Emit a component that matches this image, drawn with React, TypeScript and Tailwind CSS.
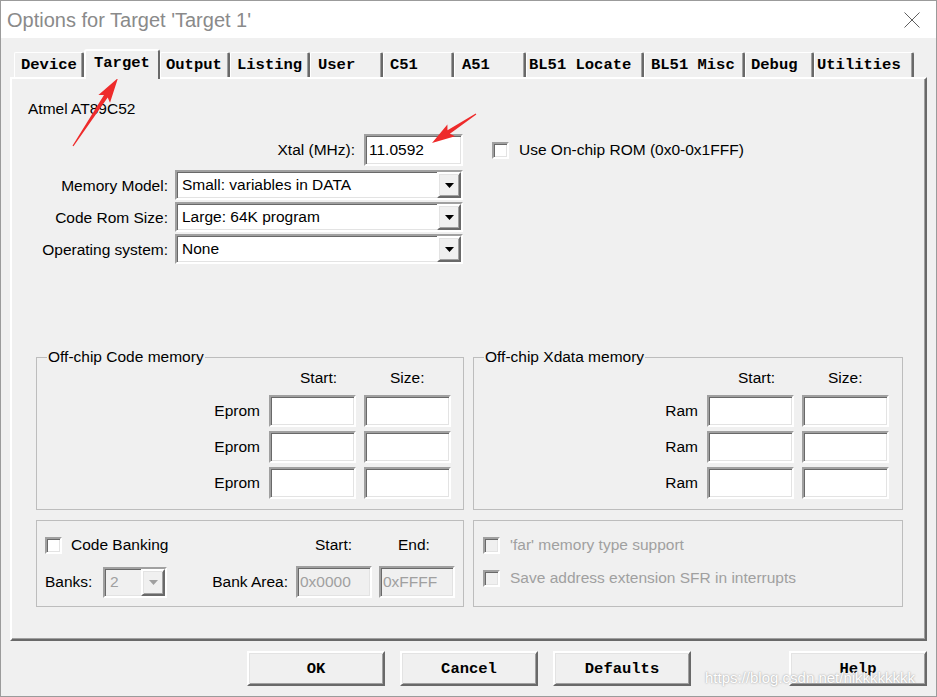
import React from "react";

const sans = "font-['Liberation_Sans',Arial,sans-serif]";
const mono = "font-['Liberation_Mono','Courier_New',monospace]";

const sunken =
  "border-2 border-t-[#a0a0a0] border-l-[#a0a0a0] border-b-white border-r-white shadow-[inset_1px_1px_0_#696969,inset_-1px_-1px_0_#e3e3e3]";
const raised =
  "border-2 border-t-white border-l-white border-b-[#696969] border-r-[#696969] shadow-[inset_1px_1px_0_#e3e3e3,inset_-1px_-1px_0_#a0a0a0]";

const tabs = [
  { name: "Device", w: "w-[70px]", pad: "pl-[6px]" },
  { name: "Target", w: "w-[76px]", pad: "pl-[8px]", active: true },
  { name: "Output", w: "w-[70px]", pad: "pl-[5px]" },
  { name: "Listing", w: "w-[80px]", pad: "pl-[6px]" },
  { name: "User", w: "w-[73px]", pad: "pl-[7px]" },
  { name: "C51", w: "w-[71px]", pad: "pl-[6px]" },
  { name: "A51", w: "w-[72px]", pad: "pl-[7px]" },
  { name: "BL51 Locate", w: "w-[118px]", pad: "pl-[2px]" },
  { name: "BL51 Misc", w: "w-[101px]", pad: "pl-[6px]" },
  { name: "Debug", w: "w-[69px]", pad: "pl-[5px]" },
  { name: "Utilities", w: "w-[100px]", pad: "pl-[2px]" },
];

function arrowPoints(x1: number, y1: number, x2: number, y2: number, head = 20, hw = 7) {
  const dx = x2 - x1;
  const dy = y2 - y1;
  const len = Math.hypot(dx, dy);
  const ux = dx / len;
  const uy = dy / len;
  const nx = -uy;
  const ny = ux;
  const bx = x2 - ux * head;
  const by = y2 - uy * head;
  const p = (x: number, y: number) => `${x.toFixed(1)},${y.toFixed(1)}`;
  return [
    p(x1 + nx * 0.6, y1 + ny * 0.6),
    p(bx + nx * 2.2, by + ny * 2.2),
    p(bx + nx * hw - ux * 3, by + ny * hw - uy * 3),
    p(x2, y2),
    p(bx - nx * hw - ux * 3, by - ny * hw - uy * 3),
    p(bx - nx * 2.2, by - ny * 2.2),
    p(x1 - nx * 0.6, y1 - ny * 0.6),
  ].join(" ");
}

function Check({ disabled, className = "" }: { disabled?: boolean; className?: string }) {
  return (
    <div
      className={`w-[17px] h-[17px] shrink-0 ${sunken} ${
        disabled ? "bg-[#f0f0f0]" : "bg-white"
      } ${className}`}
    />
  );
}

function Combo({
  text,
  className,
  disabled,
  btn = "w-[24px]",
}: {
  text: string;
  className: string;
  disabled?: boolean;
  btn?: string;
}) {
  return (
    <div
      className={`flex ${sunken} ${disabled ? "bg-[#f0f0f0] text-[#a0a0a0]" : "bg-white"} ${className}`}
    >
      <div className="flex-1 flex items-center pl-[5px]">{text}</div>
      <div className={`${btn} ${raised} bg-[#f0f0f0] flex items-center justify-center`}>
        <svg width="9" height="5" viewBox="0 0 9 5">
          <polygon points="0,0 9,0 4.5,5" fill={disabled ? "#a0a0a0" : "#000"} />
        </svg>
      </div>
    </div>
  );
}

function Field({ text, className, disabled }: { text?: string; className: string; disabled?: boolean }) {
  return (
    <div
      className={`flex items-center ${sunken} ${
        disabled ? "bg-[#f0f0f0] text-[#a0a0a0] pl-[2px]" : "bg-white pl-[3px]"
      } ${className}`}
    >
      {text}
    </div>
  );
}

function MemGroup({ title, label, wide }: { title: string; label: string; wide?: boolean }) {
  return (
    <fieldset
      className={`border border-[#bdbdbd] pb-[10px] flex flex-col items-end ${
        wide ? "w-[430px] pr-[13px]" : "w-[428px] pr-[12px]"
      }`}
    >
      <legend className="ml-[10px] px-[1px]">{title}</legend>
      <div className="mt-[1px] flex gap-[8px]">
        <div className="w-[87px] pl-[31px]">Start:</div>
        <div className="w-[87px] pl-[26px]">Size:</div>
      </div>
      <div className="mt-[7px] flex flex-col gap-[4px]">
        {[0, 1, 2].map((i) => (
          <div key={i} className="flex items-center gap-[8px]">
            <span className="mr-[1px]">{label}</span>
            <Field className="w-[87px] h-[32px]" />
            <Field className="w-[87px] h-[32px]" />
          </div>
        ))}
      </div>
    </fieldset>
  );
}

function Button({ label, className = "" }: { label: string; className?: string }) {
  return (
    <div
      className={`w-[138px] h-[35px] ${raised} bg-[#f0f0f0] flex items-center justify-center ${mono} font-bold text-[15.5px] ${className}`}
    >
      {label}
    </div>
  );
}

export default function App() {
  return (
    <div
      className={`relative w-[937px] h-[697px] border border-[#9b9b9b] bg-[#f0f0f0] flex flex-col text-black ${sans} text-[15.5px] leading-[20px]`}
    >
      {/* title bar */}
      <div className="h-[37px] shrink-0 bg-white flex items-center justify-between pl-[6px] pr-[16px]">
        <span className="text-[20px] leading-[24px] text-[#8a8a8a]">Options for Target 'Target 1'</span>
        <svg width="16" height="16" viewBox="0 0 16 16">
          <path d="M0.5 0.5L15.5 15.5M15.5 0.5L0.5 15.5" stroke="#5f5f5f" strokeWidth="1" />
        </svg>
      </div>

      {/* tabs */}
      <div className="mt-[11px] h-[28px] flex items-end pl-[13px]">
        {tabs.map((t) =>
          t.active ? (
            <div
              key={t.name}
              className={`${t.w} ${t.pad} relative z-10 -mb-[2px] h-[30px] pb-[4px] bg-[#f0f0f0] border-t-2 border-l-2 border-r-2 border-t-white border-l-white border-r-[#696969] rounded-t-[3px] flex items-center ${mono} font-bold text-[15.5px]`}
            >
              {t.name}
            </div>
          ) : (
            <div
              key={t.name}
              className={`${t.w} ${t.pad} h-[25px] border-t border-l border-r-2 border-t-white border-l-white border-r-[#696969] shadow-[inset_-1px_0_0_#a0a0a0] rounded-t-[2px] flex items-center ${mono} font-bold text-[15.5px]`}
            >
              {t.name}
            </div>
          )
        )}
      </div>

      {/* tab panel */}
      <div className="ml-[9px] w-[917px] h-[564px] shrink-0 border-2 border-t-white border-l-white border-b-[#696969] border-r-[#696969] shadow-[inset_-1px_-1px_0_#a0a0a0] flex flex-col">
        <div className="pl-[16px] pt-[20px]">Atmel AT89C52</div>

        <div className="mt-[15px] h-[32px] flex items-center">
          <div className="w-[343px] text-right">Xtal (MHz):</div>
          <Field text="11.0592" className="ml-[9px] w-[99px] h-[32px]" />
          <Check className="ml-[29px]" />
          <span className="ml-[10px]">Use On-chip ROM (0x0-0x1FFF)</span>
        </div>

        <div className="mt-[4px] flex flex-col gap-[2px]">
          {[
            ["Memory Model:", "Small: variables in DATA"],
            ["Code Rom Size:", "Large: 64K program"],
            ["Operating system:", "None"],
          ].map(([l, v]) => (
            <div key={l} className="h-[30px] flex items-center">
              <div className="w-[156px] text-right pt-[2px]">{l}</div>
              <Combo text={v} className="ml-[7px] w-[288px] h-[30px]" />
            </div>
          ))}
        </div>

        <div className="mt-[83px] pl-[24px] flex gap-[9px]">
          <MemGroup title="Off-chip Code memory" label="Eprom" />
          <MemGroup title="Off-chip Xdata memory" label="Ram" wide />
        </div>

        <div className="mt-[10px] pl-[24px] flex gap-[9px]">
          <div className="w-[428px] h-[87px] border border-[#bdbdbd] pt-[14px] px-[8px] flex flex-col">
            <div className="h-[20px] flex items-center justify-between">
              <div className="flex items-center">
                <Check />
                <span className="ml-[9px]">Code Banking</span>
              </div>
              <div className="flex gap-[7px]">
                <div className="w-[76px] pl-[19px]">Start:</div>
                <div className="w-[76px] pl-[19px]">End:</div>
              </div>
            </div>
            <div className="mt-[11px] h-[32px] flex items-center justify-between">
              <div className="flex items-center">
                <span className="w-[58px]">Banks:</span>
                <Combo text="2" disabled className="w-[64px] h-[31px]" btn="w-[24px]" />
              </div>
              <div className="flex items-center">
                <span className="mr-[8px]">Bank Area:</span>
                <Field text="0x0000" disabled className="w-[76px] h-[32px]" />
                <Field text="0xFFFF" disabled className="ml-[7px] w-[76px] h-[32px]" />
              </div>
            </div>
          </div>

          <div className="w-[430px] h-[87px] border border-[#bdbdbd] pt-[14px] pl-[9px] flex flex-col text-[#a0a0a0]">
            <div className="h-[20px] flex items-center">
              <Check disabled />
              <span className="ml-[10px]">'far' memory type support</span>
            </div>
            <div className="mt-[13px] h-[20px] flex items-center">
              <Check disabled />
              <span className="ml-[10px]">Save address extension SFR in interrupts</span>
            </div>
          </div>
        </div>
      </div>

      {/* buttons */}
      <div className="mt-[10px] flex pl-[246px] pr-[9px] gap-[15px]">
        <Button label="OK" />
        <Button label="Cancel" />
        <Button label="Defaults" />
        <Button label="Help" className="ml-auto" />
      </div>

      {/* watermark */}
      <div className="absolute left-[704px] top-[667px] text-[15px] leading-[20px] text-white [text-shadow:0_0_2px_#8a8a8a]">
        https://blog.csdn.net/nikkkkkkkk
      </div>

      {/* red annotation arrows */}
      <svg className="absolute left-[-1px] top-[-1px] pointer-events-none" width="937" height="697">
        <polygon points={arrowPoints(73, 146, 118, 78, 22, 7)} fill="#ee2b2b" />
        <polygon points={arrowPoints(476, 114, 432, 143, 20, 7)} fill="#ee2b2b" />
      </svg>
    </div>
  );
}
